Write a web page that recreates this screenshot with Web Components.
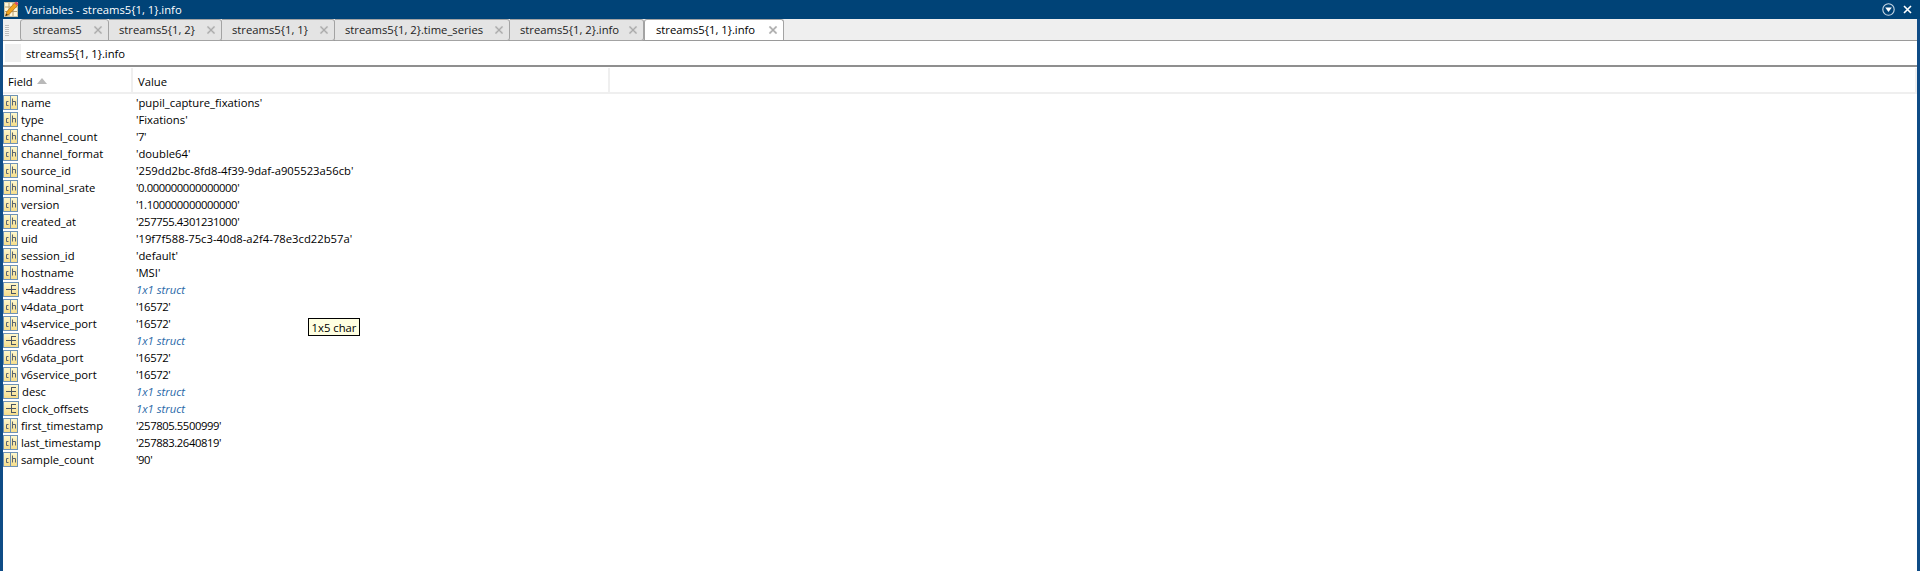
<!DOCTYPE html>
<html><head><meta charset="utf-8"><style>
html,body{margin:0;height:100%;background:#fff}
body{font:11.25px "Open Sans","Noto Sans",sans-serif;color:#000;overflow:hidden}
</style></head><body>
<var-window title="Variables - streams5{1, 1}.info" path="streams5{1, 1}.info">
<var-tab slot="tabs" w="89">streams5</var-tab>
<var-tab slot="tabs" w="113">streams5{1, 2}</var-tab>
<var-tab slot="tabs" w="113">streams5{1, 1}</var-tab>
<var-tab slot="tabs" w="175">streams5{1, 2}.time_series</var-tab>
<var-tab slot="tabs" w="134">streams5{1, 2}.info</var-tab>
<var-tab slot="tabs" w="140" active>streams5{1, 1}.info</var-tab>
<var-table slot="body">
<var-row name="name" value="'pupil_capture_fixations'"></var-row>
<var-row name="type" value="'Fixations'"></var-row>
<var-row name="channel_count" value="'7'"></var-row>
<var-row name="channel_format" value="'double64'"></var-row>
<var-row name="source_id" value="'259dd2bc-8fd8-4f39-9daf-a905523a56cb'"></var-row>
<var-row name="nominal_srate" value="'0.000000000000000'"></var-row>
<var-row name="version" value="'1.100000000000000'"></var-row>
<var-row name="created_at" value="'257755.4301231000'"></var-row>
<var-row name="uid" value="'19f7f588-75c3-40d8-a2f4-78e3cd22b57a'"></var-row>
<var-row name="session_id" value="'default'"></var-row>
<var-row name="hostname" value="'MSI'"></var-row>
<var-row name="v4address" value="1x1 struct" kind="struct"></var-row>
<var-row name="v4data_port" value="'16572'"></var-row>
<var-row name="v4service_port" value="'16572'"></var-row>
<var-row name="v6address" value="1x1 struct" kind="struct"></var-row>
<var-row name="v6data_port" value="'16572'"></var-row>
<var-row name="v6service_port" value="'16572'"></var-row>
<var-row name="desc" value="1x1 struct" kind="struct"></var-row>
<var-row name="clock_offsets" value="1x1 struct" kind="struct"></var-row>
<var-row name="first_timestamp" value="'257805.5500999'"></var-row>
<var-row name="last_timestamp" value="'257883.2640819'"></var-row>
<var-row name="sample_count" value="'90'"></var-row>
</var-table>
<var-tip slot="body">1x5 char</var-tip>
</var-window>
<script>
const esc=s=>s.replace(/&/g,'&amp;').replace(/"/g,'&quot;').replace(/</g,'&lt;');
customElements.define('var-window',class extends HTMLElement{
 connectedCallback(){
  if(this.shadowRoot)return;
  this.attachShadow({mode:'open'}).innerHTML=`<style>
  :host{display:flex;flex-direction:column;height:100vh;box-sizing:border-box;border-left:3px solid #0f4c86;border-right:3px solid #0f4c86;position:relative}
  .title{height:19px;margin:0 -3px;background:#004377;color:#fff;display:flex;align-items:center;padding-left:3px;flex:none;font-size:11.25px}
  .title .logo{margin-right:6px;display:block;flex:none}
  .title .t{flex:1;white-space:nowrap}
  .ctl{display:flex;align-items:center;gap:8px;margin-right:8px}
  .strip{height:22px;background:#efefef;display:flex;flex:none;box-sizing:border-box;border-bottom:1px solid #9a9a9a;position:relative}
  .grip{width:4px;margin:6px 11px 4px 2px;background:repeating-linear-gradient(#bdbdbd 0 1px,#f4f4f4 1px 2px)}
  .tabs{display:flex;height:22px}
  .crumb{flex:none;display:flex;align-items:center;background:#fff;box-sizing:border-box;padding-left:2px;border-bottom:2px solid #8f8f8f;height:26px}
  .crumb i{display:block;width:16px;height:18px;background:#efefef;margin-right:5px}
  .body{flex:1;position:relative;min-height:0;background:#fff}
  </style>
  <div class="title"><svg class="logo" width="16" height="17" viewBox="0 0 16 17"><rect x="1.5" y="1.5" width="13" height="14" fill="#fdf6dc" stroke="#c9c2a4"/><path d="M2 6h12M2 10.500h12M6 2v13M10 2v13" stroke="#b8a070" stroke-width="1"/><path d="M2.500 15l1-4 8-9 3 2.500-8.500 9z" fill="#f0a31e" stroke="#a86a10" stroke-width=".7"/><path d="M11.500 2l1.500-1.500 2.500 2-1.500 2z" fill="#d8486a"/><path d="M2.500 15l.6-2.500 1.900 1.600z" fill="#3a2a14"/></svg><span class="t">${esc(this.getAttribute('title'))}</span>
  <span class="ctl"><svg width="13" height="13" viewBox="0 0 13 13"><circle cx="6.500" cy="6.500" r="5.700" fill="none" stroke="#c7d8e6" stroke-width="1.100"/><path d="M3.200 4.500h6.600L6.500 9z" fill="#fff"/></svg><svg width="9" height="9" viewBox="0 0 9 9"><path d="M1 1l7 7M8 1l-7 7" stroke="#fff" stroke-width="1.600"/></svg></span></div>
  <div class="strip"><div class="grip"></div><div class="tabs"><slot name="tabs"></slot></div></div>
  <div class="crumb"><i></i><span>${esc(this.getAttribute('path'))}</span></div>
  <div class="body"><slot name="body"></slot></div>`;
  this.removeAttribute('title');
 }
});
customElements.define('var-tab',class extends HTMLElement{
 connectedCallback(){
  if(this.shadowRoot)return;
  this.attachShadow({mode:'open'}).innerHTML=`<style>
  :host{display:flex;align-items:center;box-sizing:border-box;height:22px;width:${this.getAttribute('w')}px;padding:0 5px 1px 10px;background:#e4e4e4;border:1px solid #a3a3a3;border-left:0;border-radius:0 3px 3px 0;color:#222;white-space:nowrap;position:relative}
  :host(:first-child){border-left:1px solid #a3a3a3;border-radius:3px 3px 0 3px;padding-left:12px}
  :host([active]){background:#fff;color:#000;border-bottom:0;border-left:1px solid #a3a3a3;border-radius:3px 3px 0 0;padding-left:11px;padding-right:5px;height:21px;z-index:1;margin-bottom:1px}
  span{flex:1}
  svg{display:block;flex:none}
  </style><span><slot></slot></span><svg width="10" height="10" viewBox="0 0 10 10"><path d="M1.500 1.500l7 7M8.500 1.500l-7 7" stroke="#c4c4c4" stroke-width="2.200"/><path d="M1.500 1.500l7 7M8.500 1.500l-7 7" stroke="#9a9a9a" stroke-width=".6"/></svg>`;
 }
});
customElements.define('var-table',class extends HTMLElement{
 connectedCallback(){
  if(this.shadowRoot)return;
  this.attachShadow({mode:'open'}).innerHTML=`<style>
  :host{display:block;margin-top:1px}
  .head{display:grid;grid-template-columns:130px 477px 1fr;height:24px;border-bottom:2px solid #efefef;border-right:2px solid #efefef;background:#fff}
  .head div{display:flex;align-items:center;padding:2px 0 0 5px;border-right:2px solid #efefef;box-sizing:border-box}
  .head div:last-child{border-right:0}
  svg{margin-left:4px;display:block}
  </style><div class="head"><div>Field<svg width="10" height="6" viewBox="0 0 10 6"><path d="M0 6L5 0l5 6z" fill="#b9b9b9"/></svg></div><div>Value</div><div></div></div><slot></slot>`;
 }
});
const CH=`<svg width="15" height="15" viewBox="0 0 15 15"><defs><linearGradient id="g" x1="0" y1="0" x2="0" y2="1"><stop offset="0" stop-color="#fff9d0"/><stop offset="1" stop-color="#f5dc88"/></linearGradient></defs><rect x=".5" y=".5" width="14" height="14" fill="url(#g)" stroke="#6f93b5"/><path d="M7.500 0v15" stroke="#6f93b5"/><path d="M5.500 6.500H3.500v4h2M9.500 3.500v7M9.500 6.500h3v4" fill="none" stroke="#5b6670"/></svg>`;
const ST=`<svg width="16" height="15" viewBox="0 0 16 15"><defs><linearGradient id="g" x1="0" y1="0" x2="0" y2="1"><stop offset="0" stop-color="#fff9d0"/><stop offset="1" stop-color="#f5dc88"/></linearGradient></defs><rect x=".5" y=".5" width="15" height="14" fill="url(#g)" stroke="#6f93b5"/><path d="M8.500 3v9M8.500 3.500h4.500M8.500 7.500h4.500M8.500 11.500h4.500M3 7.500h5.500" fill="none" stroke="#4a5661"/></svg>`;
customElements.define('var-row',class extends HTMLElement{
 connectedCallback(){
  if(this.shadowRoot)return;
  const st=this.getAttribute('kind')==='struct';
  const val=this.getAttribute('value');
  const num=/^'[\d.]+'$/.test(val);
  this.attachShadow({mode:'open'}).innerHTML=`<style>
  :host{display:grid;grid-template-columns:130px 1fr;height:17px;align-items:center;white-space:nowrap;line-height:17px}
  .f{display:flex;align-items:center;height:17px}
  svg{display:block;flex:none;margin-right:3px}
  .v{padding-left:3px}
  .v.n{letter-spacing:-.4px}
  .v.s{font-style:italic;color:#2a69a8}
  </style><div class="f">${st?ST:CH}<span>${esc(this.getAttribute('name'))}</span></div><div class="v ${st?'s':''} ${num?'n':''}">${esc(val)}</div>`;
 }
});
customElements.define('var-tip',class extends HTMLElement{
 connectedCallback(){
  if(this.shadowRoot)return;
  this.attachShadow({mode:'open'}).innerHTML=`<style>
  :host{position:absolute;left:305px;top:251px;width:52px;height:18px;box-sizing:border-box;border:1px solid #000;background:#ffffe1;display:flex;align-items:center;justify-content:center;white-space:nowrap}
  </style><slot></slot>`;
 }
});
</script>
</body></html>
